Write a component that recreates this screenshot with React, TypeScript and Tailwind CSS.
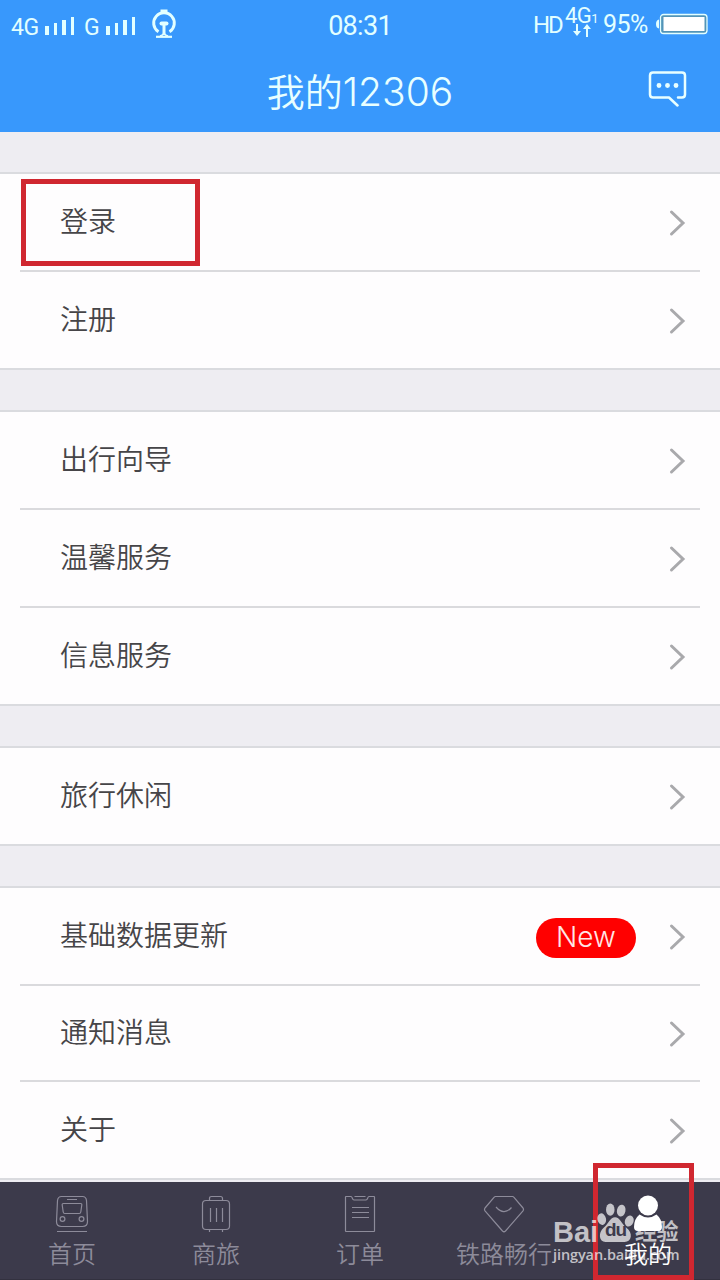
import { ReactNode } from 'react';

type MenuItem = {
  label: string;
  badge?: string;
  marked?: boolean;
  compact?: boolean;
};

const groups: MenuItem[][] = [
  [{ label: '登录', marked: true }, { label: '注册' }],
  [{ label: '出行向导' }, { label: '温馨服务' }, { label: '信息服务' }],
  [{ label: '旅行休闲' }],
  [{ label: '基础数据更新', badge: 'New' }, { label: '通知消息', compact: true }, { label: '关于' }],
];

const TrainIcon = () => (
  <svg width="34" height="38" viewBox="0 0 34 38" fill="none" stroke="currentColor" strokeWidth="1.2">
    <path d="M6.5 1.5h21Q31 1.5 31.5 5.5l1 21q0 5-5 5h-21q-5 0-5-5l1-21Q3 1.500 6.500 1.500Z" />
    <path d="M12 4.500h10M2 36.500h30" />
    <path d="M8.500 8.500h17q1.500 0 1.300 1.500l-1 7q-.3 1.500-1.500 1.500H9.700q-1.200 0-1.500-1.500l-1-7q-.2-1.500 1.300-1.500Z" />
    <circle cx="7.500" cy="24" r="2.400" />
    <circle cx="26.500" cy="24" r="2.400" />
  </svg>
);

const LuggageIcon = () => (
  <svg width="30" height="38" viewBox="0 0 30 38" fill="none" stroke="currentColor" strokeWidth="1.2">
    <rect x="1.500" y="5.500" width="27" height="29" rx="3.500" />
    <path d="M8.500 5.500v-2q0-2 2-2h9q2 0 2 2v2M9.500 13v14M15.500 13v14M21.500 13v14M8.500 34.500v2.500M21.500 34.500v2.500" />
  </svg>
);

const OrderIcon = () => (
  <svg width="32" height="38" viewBox="0 0 32 38" fill="none" stroke="currentColor" strokeWidth="1.2">
    <path d="M7 1.500H2q-.5 0-.5.5v34q0 .5.5.5h28q.5 0 .5-.5V2q0-.5-.5-.5h-5c-1.500 0-1 3.500-3 3.500H10C8 5 8.500 1.500 7 1.500Z" />
    <path d="M10.500 1.500h11M8 12.500h17M8 17.500h17M8 22.500h17" />
  </svg>
);

const DiamondIcon = () => (
  <svg width="42" height="38" viewBox="0 0 42 38" fill="none" stroke="currentColor" strokeWidth="1.2" strokeLinejoin="round">
    <path d="M12.500 1.500h17q.8 0 1.500.8L40 13q1 1.300 0 2.800L22.500 36q-1.500 1.500-3 0L2 15.800q-1-1.500 0-2.800l9-10.700q.7-.8 1.500-.8Z" />
    <path d="M13 12q8 9 15.500.5" />
  </svg>
);

const PersonIcon = () => (
  <svg width="32" height="38" viewBox="0 0 32 38" fill="currentColor">
    <circle cx="16" cy="10.500" r="10" />
    <path d="M7.500 19.500Q16 25.500 24.500 19.500Q30 24 30 32Q30 36 26 36H6Q2 36 2 32Q2 24 7.500 19.500Z" />
  </svg>
);

const tabs: { label: string; icon: ReactNode; active?: boolean }[] = [
  { label: '首页', icon: <TrainIcon /> },
  { label: '商旅', icon: <LuggageIcon /> },
  { label: '订单', icon: <OrderIcon /> },
  { label: '铁路畅行', icon: <DiamondIcon /> },
  { label: '我的', icon: <PersonIcon />, active: true },
];

const SignalBars = () => (
  <div className="flex items-end gap-[5px] h-[18px]">
    <span className="w-[3.500px] h-[9px] bg-current" />
    <span className="w-[3.500px] h-[12px] bg-current" />
    <span className="w-[3.500px] h-[15px] bg-current" />
    <span className="w-[3.500px] h-[18px] bg-current" />
  </div>
);

const RailwayLogo = () => (
  <svg width="26" height="30" viewBox="0 0 26 30" fill="none" stroke="currentColor">
    <path d="M7.500 22.800A10.300 10.300 0 1 1 18.500 22.800" strokeWidth="3" />
    <path d="M9.500 2h7" strokeWidth="3" />
    <path d="M10.500 14.500h5" strokeWidth="4" strokeLinecap="round" />
    <path d="M13 15v11" strokeWidth="3" />
    <path d="M5 27.800h16" strokeWidth="2.200" />
    <path d="M9 27q3.500-1 4-3q.5 2 4 3" strokeWidth="1.500" />
  </svg>
);

const StatusBar = () => (
  <div className="relative h-[50px] flex items-start text-[#e2ffff] font-['Roboto','Liberation_Sans',sans-serif]">
    <div className="flex items-start pl-[11px]">
      <span className="mt-[15px] w-[34px] text-[23px] leading-[26px] tracking-[-0.5px]">4G</span>
      <div className="mt-[17px]"><SignalBars /></div>
      <span className="mt-[15px] ml-[10px] w-[22px] text-[23px] leading-[26px]">G</span>
      <div className="mt-[17px]"><SignalBars /></div>
      <div className="mt-[9px] ml-[16px]"><RailwayLogo /></div>
    </div>
    <div className="absolute left-0 right-0 top-[11px] text-center text-[27px] leading-[30px] tracking-[-0.7px]">08:31</div>
    <div className="ml-auto flex items-start pr-[12px]">
      <span className="mt-[11px] w-[32px] text-[24px] leading-[28px] tracking-[-2px]">HD</span>
      <div className="w-[38px] h-[38px] mt-[6px] flex flex-col">
        <div className="flex items-end h-[20px] leading-[20px]">
          <span className="text-[22px] tracking-[-0.5px]">4G</span>
          <span className="text-[13px] leading-[14px]">1</span>
        </div>
        <svg className="ml-[8px] -mt-[2px]" width="18" height="13" viewBox="0 0 18 13" fill="none" stroke="currentColor" strokeWidth="2">
          <path d="M4 0v8M14 4v9" />
          <path d="M4 12 0 7h8ZM14 0l-4 5h8Z" fill="currentColor" stroke="none" />
        </svg>
      </div>
      <span className="mt-[10px] w-[52px] text-[25px] leading-[30px] tracking-[-0.6px]">95%</span>
      <svg className="mt-[13px]" width="53" height="22" viewBox="0 0 53 22" fill="none">
        <path d="M4 6.500Q1 7 1 11t3 4.500Z" fill="currentColor" />
        <rect x="5.500" y="1.500" width="46.500" height="19" rx="3" stroke="currentColor" strokeWidth="1.300" fill="#5295b8" />
        <rect x="8.500" y="4" width="41" height="14" fill="#fff" />
      </svg>
    </div>
  </div>
);

const Header = () => (
  <header className="h-[132px] bg-[#3898fc] text-[#e8ffff]">
    <StatusBar />
    <div className="h-[82px] grid grid-cols-[1fr_auto_1fr] items-center">
      <h1 className="col-start-2 text-[38px] leading-[48px] font-[350]">
        我的<span className="text-[39px] font-light font-['Inter','Roboto',sans-serif]">12306</span>
      </h1>
      <svg className="justify-self-end mr-[33px] mb-[4px]" width="39" height="36" viewBox="0 0 39 36" fill="none" stroke="currentColor" strokeWidth="2.500" strokeLinecap="round" strokeLinejoin="round">
        <path d="M30 26.500h4q3 0 3-3V4.500q0-3-3-3H5q-3 0-3 3v19q0 3 3 3h16l8.500 8" />
        <circle cx="11" cy="14.500" r="1.200" fill="currentColor" />
        <circle cx="19.500" cy="14.500" r="1.200" fill="currentColor" />
        <circle cx="28" cy="14.500" r="1.200" fill="currentColor" />
      </svg>
    </div>
  </header>
);

const MenuRow = ({ item }: { item: MenuItem }) => (
  <div className={`relative flex items-center pl-[60px] pr-[34px] ${item.compact ? 'h-[94px]' : 'h-[96px]'}`}>
    <span className="text-[28px] leading-[40px] font-[350] text-[#464548] pb-[4px]">{item.label}</span>
    {item.badge && (
      <span className="ml-auto mr-[33px] mt-[4px] w-[100px] h-[40px] rounded-full bg-[#ff0000] text-[#ffe6e6] text-center text-[28px] leading-[39px] font-light font-['Inter','Roboto',sans-serif]">
        {item.badge}
      </span>
    )}
    <svg className={`mt-[2px] ${item.badge ? '' : 'ml-auto'}`} width="17" height="28" viewBox="0 0 17 28" fill="none" stroke="#a9a9ac" strokeWidth="3" strokeLinecap="round">
      <path d="M2.500 3l11.500 11L2.500 25" />
    </svg>
    {item.marked && (
      <div className="absolute left-[21px] top-[5px] w-[179px] h-[87px] border-[5px] border-[#d02730]" />
    )}
  </div>
);

const Watermark = () => (
  <div className="absolute left-[553px] top-[1199px] w-[130px] h-[68px] text-white/70 font-['Open_Sans','Noto_Sans',sans-serif]">
    <div className="flex items-end h-[44px]">
      <span className="w-[44px] text-[29px] leading-[32px] mb-[-5px] font-bold font-['Liberation_Sans',sans-serif]">Bai</span>
      <div className="relative w-[37px] h-[42px]">
        <svg width="37" height="42" viewBox="0 0 39 44" fill="currentColor">
          <ellipse cx="5" cy="19" rx="4.500" ry="6.200" transform="rotate(-12 5 19)" />
          <ellipse cx="14" cy="9" rx="4.500" ry="6.500" />
          <ellipse cx="25.500" cy="10" rx="4.500" ry="6.300" transform="rotate(12 25.500 10)" />
          <ellipse cx="34" cy="21" rx="4.500" ry="6" transform="rotate(20 34 21)" />
          <path d="M19 17C14 17 12 24 7 28C1 33 2 43 9 43H29C37 43 38 33 31 28C26 24 24 17 19 17Z" />
        </svg>
        <span className="absolute left-[8px] top-[17px] text-[19px] leading-[24px] font-bold tracking-[-1px] text-[#3d3b4d] font-['Liberation_Sans',sans-serif]">du</span>
      </div>
      <span className="ml-[1px] mb-[1px] text-[22px] leading-[26px] font-bold tracking-[-0.5px] font-['Noto_Sans_CJK_SC',sans-serif]">经验</span>
    </div>
    <div className="mt-[3px] text-[14.500px] leading-[18px] font-semibold tracking-[-0.1px] whitespace-nowrap">jingyan.baidu.com</div>
  </div>
);

const TabBar = () => (
  <nav className="h-[98px] grid grid-cols-5 bg-[#3c3a4b] border-b border-[#33313f]">
    {tabs.map((tab) => (
      <div key={tab.label} className={`flex flex-col items-center pt-[13px] ${tab.active ? 'text-white' : 'text-[#8d8b9a]'}`}>
        {tab.icon}
        <span className="mt-[4px] text-[24px] leading-[32px] font-[350] whitespace-nowrap">{tab.label}</span>
      </div>
    ))}
  </nav>
);

export default function App() {
  return (
    <div className="relative w-[720px] h-[1280px] overflow-hidden flex flex-col bg-[#eeedf2] font-['Noto_Sans_CJK_SC',sans-serif]">
      <Header />
      <main className="flex flex-col gap-[40px] pt-[40px] pb-[2px]">
        {groups.map((group, idx) => (
          <section key={idx} className="bg-[#fefdfe] border-y-2 border-[#dadbdf]">
            {group.map((item, i) => (
              <div key={item.label}>
                {i > 0 && <div className="mx-[20px] h-[2px] bg-[#dadadd]" />}
                <MenuRow item={item} />
              </div>
            ))}
          </section>
        ))}
      </main>
      <TabBar />
      {/* Highlight around the active tab */}
      <div className="absolute left-[593px] top-[1163px] w-[101px] h-[117px] border-[5px] border-[#d02730]" />
      <Watermark />
    </div>
  );
}
